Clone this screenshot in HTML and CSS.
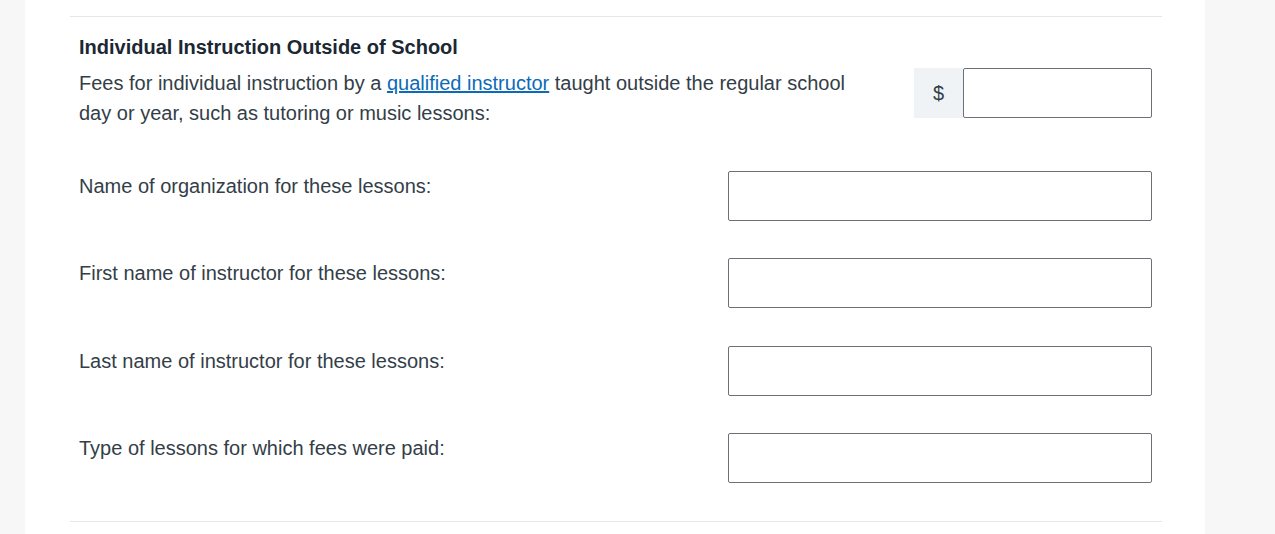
FILE: index.html
```html
<!DOCTYPE html>
<html lang="en">
<head>
    <meta charset="UTF-8">
    <meta name="viewport" content="width=device-width, initial-scale=1.0">
    <title>Individual Instruction Outside of School</title>
    <link rel="stylesheet" href="styles.css">
</head>
<body>
    <div class="panel">
        <div class="section">
            <h3 class="section-title">Individual Instruction Outside of School</h3>
            <div class="fee-row">
                <p class="fee-text">Fees for individual instruction by a <a href="#">qualified instructor</a> taught outside the regular school day or year, such as tutoring or music lessons:</p>
                <div class="money">
                    <span class="money-addon">$</span>
                    <input type="text" class="money-input">
                </div>
            </div>

            <div class="field">
                <label for="org">Name of organization for these lessons:</label>
                <input type="text" id="org">
            </div>
            <div class="field">
                <label for="first">First name of instructor for these lessons:</label>
                <input type="text" id="first">
            </div>
            <div class="field">
                <label for="last">Last name of instructor for these lessons:</label>
                <input type="text" id="last">
            </div>
            <div class="field">
                <label for="type">Type of lessons for which fees were paid:</label>
                <input type="text" id="type">
            </div>
        </div>
    </div>
</body>
</html>
```

FILE: styles.css
```css
body {
    margin: 0;
    background-color: #f7f7f7;
    font-family: "Liberation Sans", Arial, sans-serif;
    color: #333e48;
}

.panel {
    margin-left: 25px;
    width: 1180px;
    box-sizing: border-box;
    background-color: #fff;
    padding: 16px 43px 12px 45px;
    min-height: 534px;
}

.section {
    border-top: 1px solid #e4e6e8;
    border-bottom: 1px solid #e4e6e8;
    padding: 18px 10px 38px 9px;
}

.section-title {
    margin: 0 0 9px;
    font-size: 20px;
    line-height: 24px;
    font-weight: bold;
    color: #1b2733;
}

.fee-row {
    display: flex;
    align-items: flex-start;
    gap: 40px;
}

.fee-text {
    flex: 1;
    margin: 0;
    font-size: 20px;
    line-height: 30px;
}

.fee-text a {
    color: #0b6bb8;
    text-decoration: underline;
}

.money {
    display: flex;
    width: 238px;
}

.money-addon {
    width: 49px;
    height: 50px;
    line-height: 50px;
    text-align: center;
    background-color: #f0f3f6;
    font-size: 20px;
}

input {
    height: 50px;
    box-sizing: border-box;
    border: 1px solid #6d7177;
    border-radius: 2px;
    background-color: #fff;
    font-size: 20px;
    padding: 0 10px;
}

.money-input {
    flex: 1;
    width: 0;
}

.field {
    display: flex;
    justify-content: space-between;
    align-items: flex-start;
    margin-top: 37.4px;
}

.fee-row + .field {
    margin-top: 43px;
}

.field label {
    font-size: 20px;
    line-height: 30px;
}

.field input {
    width: 424px;
}
```
